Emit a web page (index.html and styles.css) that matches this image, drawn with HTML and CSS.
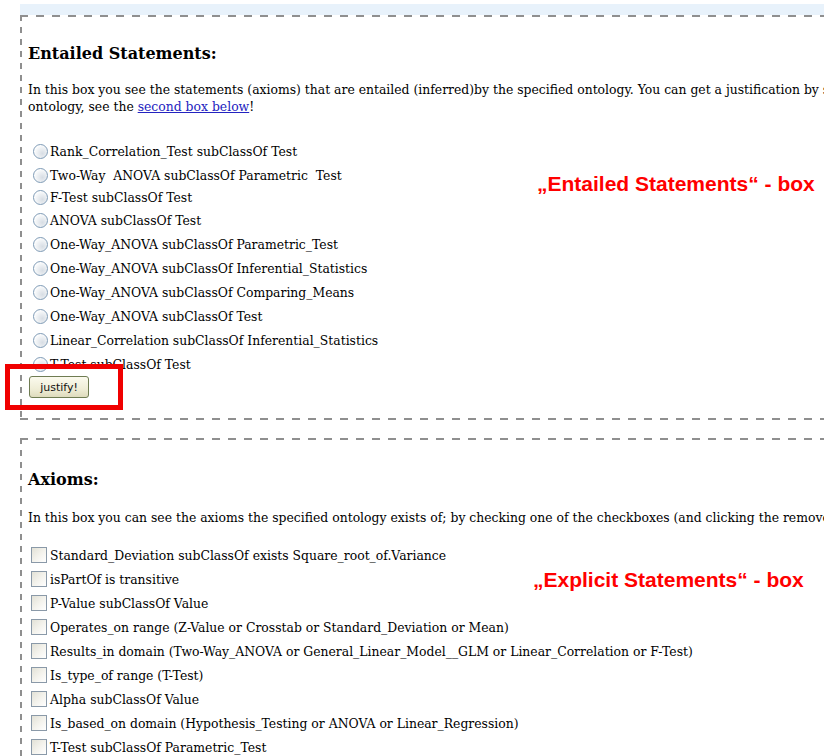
FILE: index.html
```html
<!DOCTYPE html>
<html lang="en">
<head>
<meta charset="utf-8">
<title>Ontology statements</title>
<link rel="stylesheet" href="styles.css">
</head>
<body>
<div class="page">
  <div class="topbar"></div>

  <section class="box box-closed" id="entailed">
    <h2 class="box-title">Entailed Statements:</h2>
    <p class="intro">In this box you see the statements (axioms) that are entailed (inferred)by the specified ontology. You can get a justification by selecting one of them and clicking the justify button. For the explicit axioms of the<br>ontology, see the <a href="#axioms">second box below</a>!</p>
    <form class="choices">
      <label class="row"><input type="radio" class="radio" name="st">Rank_Correlation_Test subClassOf Test</label>
      <label class="row"><input type="radio" class="radio" name="st">Two-Way&nbsp; ANOVA subClassOf Parametric&nbsp; Test</label>
      <label class="row row-tight"><input type="radio" class="radio" name="st">F-Test subClassOf Test</label>
      <label class="row"><input type="radio" class="radio" name="st">ANOVA subClassOf Test</label>
      <label class="row"><input type="radio" class="radio" name="st">One-Way_ANOVA subClassOf Parametric_Test</label>
      <label class="row"><input type="radio" class="radio" name="st">One-Way_ANOVA subClassOf Inferential_Statistics</label>
      <label class="row"><input type="radio" class="radio" name="st">One-Way_ANOVA subClassOf Comparing_Means</label>
      <label class="row"><input type="radio" class="radio" name="st">One-Way_ANOVA subClassOf Test</label>
      <label class="row"><input type="radio" class="radio" name="st">Linear_Correlation subClassOf Inferential_Statistics</label>
      <label class="row"><input type="radio" class="radio" name="st">T-Test subClassOf Test</label>
      <button type="button" class="btn">justify!</button>
    </form>
    <span class="highlight"></span>
    <span class="note note-entailed">„Entailed Statements“ - box</span>
  </section>

  <section class="box" id="axioms">
    <h2 class="box-title">Axioms:</h2>
    <p class="intro">In this box you can see the axioms the specified ontology exists of; by checking one of the checkboxes (and clicking the remove button) you can delete it.</p>
    <form class="choices">
      <label class="row"><input type="checkbox" class="check">Standard_Deviation subClassOf exists Square_root_of.Variance</label>
      <label class="row"><input type="checkbox" class="check">isPartOf is transitive</label>
      <label class="row"><input type="checkbox" class="check">P-Value subClassOf Value</label>
      <label class="row"><input type="checkbox" class="check">Operates_on range (Z-Value or Crosstab or Standard_Deviation or Mean)</label>
      <label class="row"><input type="checkbox" class="check">Results_in domain (Two-Way_ANOVA or General_Linear_Model__GLM or Linear_Correlation or F-Test)</label>
      <label class="row"><input type="checkbox" class="check">Is_type_of range (T-Test)</label>
      <label class="row"><input type="checkbox" class="check">Alpha subClassOf Value</label>
      <label class="row"><input type="checkbox" class="check">Is_based_on domain (Hypothesis_Testing or ANOVA or Linear_Regression)</label>
      <label class="row"><input type="checkbox" class="check">T-Test subClassOf Parametric_Test</label>
    </form>
    <span class="note note-explicit">„Explicit Statements“ - box</span>
  </section>
</div>
</body>
</html>
```

FILE: styles.css
```css
html, body {
  margin: 0;
  padding: 0;
  background: #fff;
  overflow: hidden;
}

body {
  font-family: "DejaVu Serif", "Liberation Serif", serif;
  font-size: 12.4px;
  color: #000;
}

.page {
  padding: 4px 0 0 20px;
  width: 1400px;
}

.topbar {
  height: 11px;
  background: #e8f2fb;
}

/* dashed frame drawn with gradients so the dash rhythm is fixed */
.box {
  position: relative;
  padding: 1px 0 0 8px;
  background-image:
    repeating-linear-gradient(to right, #8f8f8f 0 8px, transparent 8px 16px),
    repeating-linear-gradient(to bottom, #8f8f8f 0 6px, transparent 6px 12px);
  background-size: 100% 2px, 2px 100%;
  background-position: 0 0, 0 0;
  background-repeat: no-repeat;
}

.box-closed {
  padding-bottom: 22px;
  background-image:
    repeating-linear-gradient(to right, #8f8f8f 0 8px, transparent 8px 16px),
    repeating-linear-gradient(to bottom, #8f8f8f 0 6px, transparent 6px 12px),
    repeating-linear-gradient(to right, #8f8f8f 0 8px, transparent 8px 16px);
  background-size: 100% 2px, 2px 100%, 100% 2px;
  background-position: 0 0, 0 0, 0 100%;
}

#axioms {
  margin-top: 18px;
}

.box-title {
  margin: 28px 0 0 0;
  font-size: 16px;
  line-height: 20px;
  font-weight: bold;
}

#axioms .box-title {
  margin-top: 31px;
}

.intro {
  margin: 17px 0 0 0;
  line-height: 17px;
  white-space: nowrap;
}

#axioms .intro {
  margin-top: 19px;
}

.intro a {
  color: #2323c0;
}

.choices {
  margin: 24px 0 0 0;
  display: flex;
  flex-direction: column;
  align-items: flex-start;
}

#axioms .choices {
  margin-top: 17px;
}

.row {
  display: flex;
  align-items: center;
  height: 24px;
  white-space: nowrap;
}

.row-tight {
  height: 21px;
}

.radio {
  appearance: none;
  margin: 0 2px 0 5px;
  width: 15px;
  height: 15px;
  border-radius: 50%;
  border: 1px solid #7f9bb6;
  background: radial-gradient(circle at 65% 65%, #d7dde4 0, #eef1f4 45%, #fff 75%);
  box-sizing: border-box;
}

.check {
  appearance: none;
  margin: 0 3px 0 3px;
  width: 16px;
  height: 16px;
  border: 1px solid #8a99a8;
  background: linear-gradient(135deg, #e2e1d6 0, #f3f2ec 50%, #fff 100%);
  box-sizing: border-box;
}

.btn {
  margin: 0 0 0 1px;
  height: 22px;
  width: 60px;
  padding: 0;
  font-family: "DejaVu Sans", "Liberation Sans", sans-serif;
  font-size: 11px;
  color: #111;
  border: 1px solid #6f7c52;
  border-radius: 3px;
  background: linear-gradient(to bottom, #fbfaee 0, #efedd6 60%, #dedbbd 100%);
}

/* red annotation overlays */
.highlight {
  position: absolute;
  left: -15px;
  top: 349px;
  width: 108px;
  height: 36px;
  border: 5px solid #f00000;
}

.note {
  position: absolute;
  font-family: "Liberation Sans", Arial, sans-serif;
  font-weight: bold;
  font-size: 21px;
  line-height: 24px;
  color: #ff0000;
  white-space: nowrap;
}

.note-entailed {
  left: 517px;
  top: 157px;
}

.note-explicit {
  left: 513px;
  top: 130px;
}
```
